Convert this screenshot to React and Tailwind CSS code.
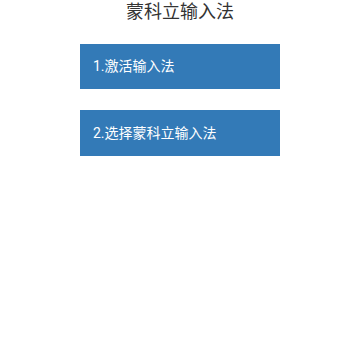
export default function App() {
  const font = { fontFamily: 'Roboto, "Noto Sans CJK SC", sans-serif' };
  return (
    <div className="w-[360px] h-[360px] bg-white flex flex-col items-center" style={font}>
      <div className="h-[24px] flex items-center text-[18px] leading-none text-[#333]">蒙科立输入法</div>
      <div className="mt-[20px] flex flex-col gap-[21px]">
        <button className="w-[200px] h-[45px] bg-[#337ab7] text-white text-[14px] text-left pl-[13px] flex items-center">1.激活输入法</button>
        <button className="w-[200px] h-[46px] bg-[#337ab7] text-white text-[14px] text-left pl-[13px] flex items-center">2.选择蒙科立输入法</button>
      </div>
    </div>
  );
}
